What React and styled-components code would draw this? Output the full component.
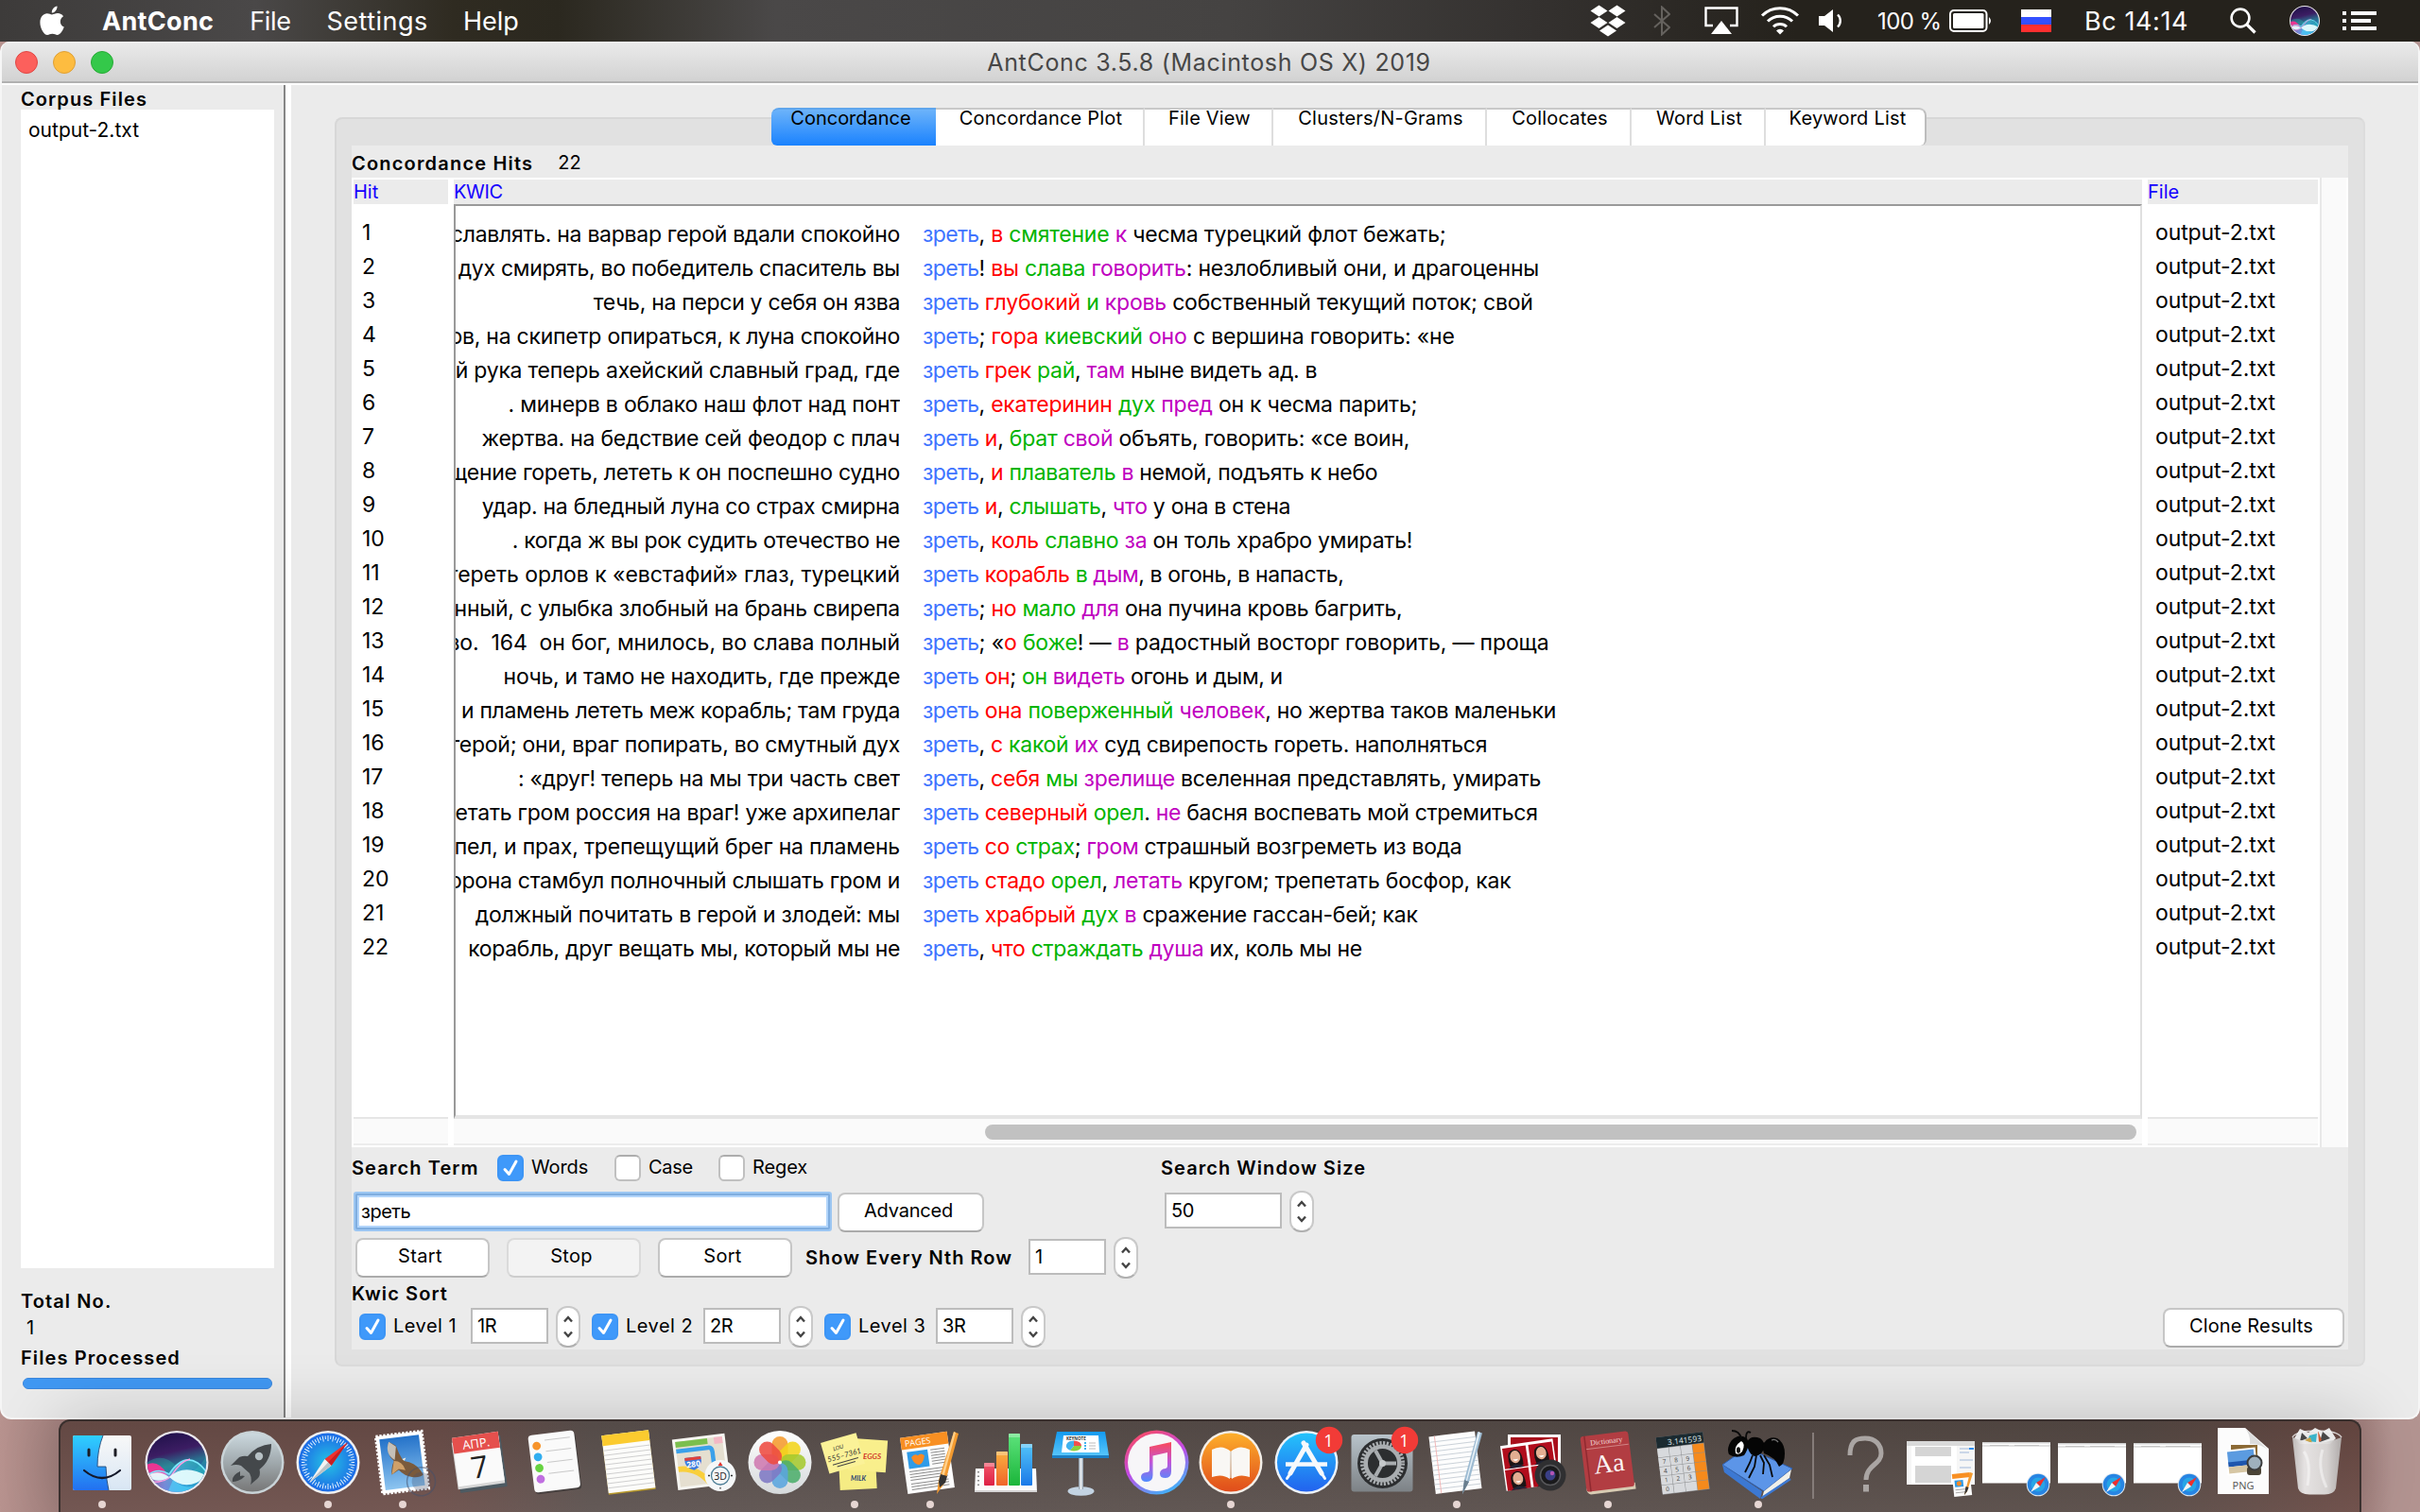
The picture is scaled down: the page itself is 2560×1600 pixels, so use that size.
import React from "react";
import styled, { createGlobalStyle, css } from "styled-components";

const Global = createGlobalStyle`
  * { box-sizing: border-box; }
  html, body { margin: 0; padding: 0; }
  body {
    width: 2560px;
    height: 1600px;
    overflow: hidden;
    font-family: Inter, "Noto Sans", "Liberation Sans", sans-serif;
    color: #000;
  }
  svg { display: block; flex: none; }
`;

/* ---------- desktop + menu bar ---------- */

const Desktop = styled.div`
  display: flex;
  flex-direction: column;
  width: 2560px;
  height: 1600px;
  overflow: hidden;
  background: linear-gradient(90deg, #b8938f 0, #a58380 60px, #a58380 2500px, #b39491 2530px);
`;

const MenuBar = styled.header`
  display: flex;
  align-items: center;
  height: 44px;
  flex: none;
  padding: 0 46px 0 42px;
  color: #fff;
  background: linear-gradient(
    90deg,
    #3d3b3a 0, #4a4848 270px, #2f2b21 480px, #2b281f 590px, #4a4848 820px,
    #454342 1300px, #33302e 1640px, #25221c 1900px, #25221c 2560px
  );
`;

const MenuItem = styled.span`
  font-size: 27px;
  line-height: 44px;
  padding-top: 1px;
  letter-spacing: ${(p) => p.$track || 0}px;
  font-weight: ${(p) => (p.$bold ? 700 : 400)};
  margin-left: ${(p) => p.$gap}px;
  white-space: pre;
`;

const Spacer = styled.div`
  flex: 1;
`;

const Tray = styled.div`
  display: flex;
  align-items: center;
  height: 44px;
`;

const TrayItem = styled.div`
  width: ${(p) => p.$w}px;
  margin-left: ${(p) => p.$gap || 0}px;
  display: flex;
  align-items: center;
  font-size: ${(p) => p.$size || 27}px;
  letter-spacing: ${(p) => p.$track || 0}px;
  white-space: nowrap;
`;

/* ---------- window ---------- */

const Window = styled.main`
  display: flex;
  flex-direction: column;
  width: 2560px;
  height: 1458px;
  flex: none;
  border-radius: 10px 10px 12px 12px;
  background: #ebebeb;
  overflow: hidden;
  border: solid #f6f6f6;
  border-width: 0 2px 2px 2px;
`;

const TitleBar = styled.div`
  position: relative;
  display: flex;
  align-items: center;
  justify-content: center;
  height: 44px;
  flex: none;
  margin: 0 -2px;
  background: linear-gradient(#f2f2f2 0, #e9e9e9 3px, #d2d2d2 42px);
  border-bottom: 2px solid #b1b1b1;
`;

const Lights = styled.div`
  position: absolute;
  left: 16px;
  top: 10px;
  display: flex;
  gap: 16px;
`;

const Light = styled.span`
  width: 24px;
  height: 24px;
  border-radius: 50%;
  background: ${(p) => p.$c};
  border: 1px solid ${(p) => p.$b};
`;

const Title = styled.h1`
  margin: 0 2px 0 0;
  padding-top: 2px;
  font-size: 25px;
  font-weight: 400;
  letter-spacing: 0.68px;
  color: #474747;
  line-height: 42px;
`;

const Body = styled.div`
  display: flex;
  flex: 1;
  min-height: 0;
  border-top: 2px solid #fff;
`;

const Sidebar = styled.aside`
  display: flex;
  flex-direction: column;
  width: 298px;
  padding: 0 10px 0 20px;
`;

const Bold = styled.span`
  font-size: 20px;
  font-weight: 600;
  letter-spacing: ${(p) => p.$track || 1.1}px;
  line-height: 26px;
  white-space: nowrap;
  flex: none;
  width: ${(p) => (p.$w ? `${p.$w}px` : "auto")};
`;

const SideTitle = styled(Bold)`
  height: 26px;
  line-height: 30px;
`;

const FileBox = styled.div`
  height: 1226px;
  background: #fff;
  padding: 8px 8px;
  font-size: 21px;
  line-height: 27px;
`;

const SideStats = styled.div`
  display: flex;
  flex-direction: column;
  padding-top: 22px;
`;

const Count = styled.span`
  font-size: 20px;
  line-height: 30px;
  height: 34px;
  padding-left: 6px;
`;

const ProgressBar = styled.div`
  height: 12px;
  margin: 8px 0 0 2px;
  width: 264px;
  border-radius: 6px;
  background: #4098f3;
  border: 1px solid #3a86dc;
`;

const Sash = styled.div`
  width: 8px;
  background: #fff;
  border-left: 2px solid #868686;
  flex: none;
`;

const Main = styled.section`
  flex: 1;
  min-width: 0;
  padding: 34px 56px 0 46px;
`;

const Notebook = styled.div`
  display: flex;
  flex-direction: column;
  height: 1322px;
  border: 2px solid #d7d7d7;
  border-right-color: #dcdcdc;
  border-bottom-color: #dcdcdc;
  border-radius: 8px;
  background: #e1e1e1;
  padding: 0 16px 16px;
`;

const Tabs = styled.nav`
  display: flex;
  align-self: flex-start;
  height: 40px;
  margin: -12px 0 0 444px;
  flex: none;
  border-radius: 8px;
  background: #fff;
`;

const Tab = styled.div`
  width: ${(p) => p.$w}px;
  height: 40px;
  padding-left: 3px;
  text-align: center;
  font-size: 20px;
  line-height: 19px;
  letter-spacing: 0.2px;
  white-space: nowrap;
  border-top: 2px solid #c8c8c8;
  border-right: 2px solid #dedede;
  &:last-child {
    padding-left: 5px;
    border-right-color: #bdbdbd;
    border-radius: 0 8px 6px 0;
  }
  ${(p) =>
    p.$active &&
    css`
      background: linear-gradient(#6cb3fa, #1a82fe);
      border-color: #5fa5ec;
      border-right: 0;
      border-radius: 8px 0 0 6px;
      letter-spacing: 0;
      padding: 0 6px 0 0;
    `}
`;

const Pane = styled.div`
  display: flex;
  flex-direction: column;
  flex: 1;
  background: #ebebeb;
`;

const HitsBar = styled.div`
  display: flex;
  align-items: center;
  height: 34px;
  padding-top: 4px;
`;

const HitsCount = styled.span`
  font-size: 20px;
  margin: -3px 0 0 26px;
`;

/* ---------- concordance table ---------- */

const Table = styled.div`
  display: flex;
  height: 1026px;
  background: #fff;
  padding: 2px 2px 2px 2px;
`;

const Column = styled.div`
  display: flex;
  flex-direction: column;
  width: ${(p) => p.$w}px;
  margin-right: ${(p) => p.$mr || 0}px;
`;

const Head = styled.div`
  height: 26px;
  background: #ebebeb;
  color: #1400ff;
  font-size: 20px;
  line-height: 27px;
  letter-spacing: ${(p) => p.$track || 0}px;
`;

const Cells = styled.div`
  flex: 1;
  padding: ${(p) => p.$pad};
  font-size: 23px;
`;

const Cell = styled.div`
  height: 36.02px;
  line-height: 36px;
  letter-spacing: -0.1px;
`;

const KwicBox = styled.div`
  flex: 1;
  padding-top: 12px;
  border-top: 2px solid #999;
  border-left: 2px solid #999;
  border-right: 2px solid #e0e0e0;
  border-bottom: 4px solid #e5e5e5;
  overflow: hidden;
`;

const KwicRow = styled.div`
  display: flex;
  height: 36.02px;
  font-size: 23px;
  line-height: 36px;
  white-space: pre;
`;

const LeftContext = styled.div`
  display: flex;
  justify-content: flex-end;
  width: 470px;
  overflow: hidden;
  letter-spacing: ${(p) => p.$track + 0.015}px;
`;

const RightContext = styled.div`
  padding-left: 24px;
  letter-spacing: ${(p) => p.$track + 0.08}px;
`;

const tones = { k: "#3f74ff", r: "#ff0000", g: "#00b400", m: "#c000c0" };

const Word = styled.span`
  color: ${(p) => tones[p.$tone]};
  ${(p) => p.$tone === "k" && "letter-spacing: -0.65px;"}
`;

const ScrollTrack = styled.div`
  height: ${(p) => p.$h || 28}px;
  flex: none;
  background: #fafafa;
  border-bottom: 2px solid #ececec;
  border-top: ${(p) => (p.$top ? "2px solid #e6e6e6" : "0")};
  padding: 6px 6px 0;
  display: flex;
  justify-content: flex-end;
`;

const Thumb = styled.div`
  width: 1218px;
  height: 16px;
  border-radius: 8px;
  background: #c1c1c1;
`;

const VScroll = styled.div`
  width: 28px;
  margin: -2px 0;
  background: #fafafa;
  border-left: 2px solid #e8e8e8;
`;

/* ---------- controls ---------- */

const Controls = styled.div`
  display: flex;
  flex-direction: column;
  height: 214px;
`;

const Line = styled.div`
  display: flex;
  align-items: center;
  height: ${(p) => p.$h}px;
  margin-top: ${(p) => p.$mt || 0}px;
  padding-left: ${(p) => p.$pl || 0}px;
  padding-top: ${(p) => p.$pt || 0}px;
`;

const Label = styled.span`
  font-size: 20px;
  line-height: 26px;
  width: ${(p) => p.$w}px;
  margin-left: 8px;
  padding-bottom: 2px;
  letter-spacing: ${(p) => p.$track || 0}px;
  white-space: nowrap;
  flex: none;
`;

const CheckBox = styled.span`
  display: flex;
  align-items: center;
  justify-content: center;
  width: 28px;
  height: 28px;
  flex: none;
  border-radius: 6px;
  background: #fff;
  border: 2px solid #c0c0c0;
  border-top-color: #adadad;
  ${(p) =>
    p.$on &&
    css`
      background: #3f99fa;
      border-color: #3d95f5;
    `}
`;

const Button = styled.button`
  width: ${(p) => p.$w}px;
  height: 42px;
  flex: none;
  margin: ${(p) => p.$m || 0};
  padding: 0 5px 4px 0;
  font: 400 20px Inter, sans-serif;
  letter-spacing: ${(p) => p.$track || 0}px;
  color: #000;
  background: #fff;
  border: 2px solid #c6c6c6;
  border-bottom-color: #ababab;
  border-radius: 8px;
  ${(p) =>
    p.$dim &&
    css`
      background: #f3f3f3;
      border-color: #dadada;
      border-bottom-color: #cdcdcd;
    `}
`;

const SearchField = styled.div`
  width: 506px;
  height: 42px;
  margin-right: 6px;
  border: 2px solid #9cc6f2;
  box-shadow: inset 0 0 0 2px #7faddf, inset 0 0 0 4px #b2d5fb;
  border-radius: 3px;
  background: #fff;
  font-size: 20px;
  letter-spacing: -0.5px;
  line-height: 38px;
  padding-left: 6px;
  flex: none;
`;

const Field = styled.div`
  width: ${(p) => p.$w}px;
  height: 38px;
  margin: 0 8px 2px 0;
  border: 2px solid #bcbcbc;
  background: #fff;
  font-size: 20px;
  letter-spacing: -0.4px;
  line-height: 35px;
  padding-left: 5px;
  flex: none;
`;

const SpinBody = styled.span`
  display: flex;
  flex-direction: column;
  align-items: center;
  justify-content: space-between;
  width: 26px;
  height: 44px;
  padding: 8px 0;
  border: 2px solid #c9c9c9;
  border-bottom-color: #b0b0b0;
  border-radius: 12px;
  background: #fff;
  flex: none;
`;

const Gap = styled.span`
  width: ${(p) => p.$w}px;
  flex: none;
`;

/* ---------- dock ---------- */

const DockArea = styled.footer`
  display: flex;
  justify-content: center;
  height: 98px;
  flex: none;
`;

const Dock = styled.div`
  display: flex;
  position: relative;
  width: 2436px;
  height: 98px;
  padding-left: 4px;
  border: solid #3a302e;
  border-width: 2px 2px 0 2px;
  border-radius: 12px 12px 0 0;
  background: linear-gradient(180deg, rgba(20, 15, 12, 0.12), rgba(160, 150, 150, 0.1)),
    linear-gradient(90deg, #6e504b 0, #6e504b 400px, #5d5350 560px, #574d49 1800px, #574b46 2200px, #6c4b45 2430px);
  box-shadow: 0 0 70px rgba(0, 0, 0, 0.2);
`;

const Slot = styled.div`
  display: flex;
  flex-direction: column;
  align-items: center;
  width: ${(p) => p.$w || 79.65}px;
  flex: none;
  margin-top: -2px;
`;

const Dot = styled.span`
  width: 8px;
  height: 8px;
  margin-top: 2px;
  border-radius: 50%;
  background: #e6d6d3;
`;

const DockLine = styled.span`
  width: 2px;
  height: 70px;
  margin: 12px 14px 0 17px;
  background: #857c79;
  flex: none;
`;

/* ---------- small drawings ---------- */

const Check = () => (
  <svg width="20" height="22" viewBox="0 0 20 22">
    <path d="M4 12.5 L8.5 17.5 L16 4" fill="none" stroke="#fff" strokeWidth="3" strokeLinecap="round" strokeLinejoin="round" />
  </svg>
);

const Spinner = () => (
  <SpinBody>
    <svg width="12" height="8" viewBox="0 0 12 8"><path d="M2 6.5 L6 2 L10 6.5" fill="none" stroke="#444" strokeWidth="2.4" /></svg>
    <svg width="12" height="8" viewBox="0 0 12 8"><path d="M2 1.5 L6 6 L10 1.5" fill="none" stroke="#444" strokeWidth="2.4" /></svg>
  </SpinBody>
);

const Apple = () => (
  <svg width="26" height="32" viewBox="0 0 26 32" fill="#fff">
    <path d="M18.5 0.5 C18.8 3.8 16 7.6 12.8 7.6 C12.4 4.4 15.2 1 18.5 .5 Z" />
    <path d="M13 9.4 C14.7 9.4 16.5 8 19.2 8.1 C21.6 8.2 23.8 9.3 25 11.2 C20.3 14.2 21 20.6 25.8 22.5 C24.6 26 21.7 30.9 18.7 31 C16.7 31 15.9 29.8 13.4 29.8 C10.9 29.8 10 31 8.1 31 C4.6 31 .4 24.2 .4 17.7 C.4 11.7 4.1 8.2 7.8 8.2 C10 8.2 11.7 9.4 13 9.4 Z" />
  </svg>
);

const DropboxGlyph = () => (
  <svg width="38" height="34" viewBox="0 0 38 34" fill="#fff">
    <path d="M9.5 .5 L18.500 6.5 L9.5 12.5 L.5 6.5 Z M28.5 .5 L37.500 6.5 L28.5 12.5 L19.500 6.5 Z M9.5 13 L18.500 19 L9.5 25 L.5 19 Z M28.5 13 L37.500 19 L28.5 25 L19.500 19 Z M19 21.500 L28 27.500 L19 33.500 L10 27.500 Z" />
  </svg>
);

const BluetoothGlyph = () => (
  <svg width="18" height="32" viewBox="0 0 18 32">
    <path d="M1 9 L17 23 L9 30.5 V1.5 L17 9 L1 23" fill="none" stroke="#65625e" strokeWidth="2" />
  </svg>
);

const AirplayGlyph = () => (
  <svg width="36" height="30" viewBox="0 0 36 30">
    <path d="M9 20 H1.5 V1.5 H34.5 V20 H27" fill="none" stroke="#fff" strokeWidth="2.4" />
    <path d="M18 15 L29 29 H7 Z" fill="#fff" />
  </svg>
);

const WifiGlyph = () => (
  <svg width="42" height="30" viewBox="0 0 42 30">
    <g fill="none" stroke="#fff" strokeWidth="3">
      <path d="M2 9.5 A27 27 0 0 1 40 9.5" />
      <path d="M8 15.5 A18.5 18.5 0 0 1 34 15.5" />
      <path d="M14 21.3 A10 10 0 0 1 28 21.3" />
    </g>
    <path d="M21 29.5 L17 25.4 A5.6 5.6 0 0 1 25 25.4 Z" fill="#fff" />
  </svg>
);

const VolumeGlyph = () => (
  <svg width="28" height="26" viewBox="0 0 28 26">
    <path d="M0 8 H6 L15 1 V25 L6 18 H0 Z" fill="#fff" />
    <path d="M20 6.5 A9 9 0 0 1 20 19.5" fill="none" stroke="#fff" strokeWidth="2.4" />
  </svg>
);

const BatteryGlyph = () => (
  <svg width="46" height="24" viewBox="0 0 46 24">
    <rect x="1" y="1" width="38.5" height="22" rx="4" fill="none" stroke="#fff" strokeWidth="2" />
    <rect x="4" y="4" width="32.5" height="16" rx="1.5" fill="#fff" />
    <path d="M42 8 Q46 12 42 16 Z" fill="#fff" />
  </svg>
);

const FlagGlyph = () => (
  <svg width="32" height="24" viewBox="0 0 32 24">
    <rect width="32" height="8" fill="#fff" />
    <rect y="8" width="32" height="8" fill="#3350ff" />
    <rect y="16" width="32" height="8" fill="#ff2f2f" />
  </svg>
);

const SearchGlyph = () => (
  <svg width="28" height="28" viewBox="0 0 28 28" fill="none" stroke="#fff">
    <circle cx="11" cy="11" r="9.4" strokeWidth="2.6" />
    <path d="M17.8 17.8 L26.5 26.5" strokeWidth="3.2" />
  </svg>
);

const MenuListGlyph = () => (
  <svg width="36" height="20" viewBox="0 0 36 20" fill="#fff">
    <path d="M0 0h4v4H0z M0 8h4v4H0z M0 16h4v4H0z M9 0h27v4H9z M9 8h21v4H9z M9 16h27v4H9z" />
  </svg>
);

const Defs = () => (
  <svg width="0" height="0" viewBox="0 0 1 1">
    <defs>
      <linearGradient id="finderL" x1="0" y1="0" x2="0" y2="1"><stop offset="0" stopColor="#2fd0ff" /><stop offset="1" stopColor="#2370f0" /></linearGradient>
      <linearGradient id="finderR" x1="0" y1="0" x2="0" y2="1"><stop offset="0" stopColor="#f8f8f8" /><stop offset="1" stopColor="#d8e6f4" /></linearGradient>
      <linearGradient id="siriBg" x1="0" y1="0" x2="0.25" y2="1"><stop offset="0" stopColor="#1b0f46" /><stop offset=".4" stopColor="#3c1d63" /><stop offset=".62" stopColor="#2a6f8f" /><stop offset="1" stopColor="#1b3fd8" /></linearGradient>
      <linearGradient id="siriWave" x1="0" y1="0" x2="1" y2="0"><stop offset="0" stopColor="#ff2e92" /><stop offset=".3" stopColor="#c9a4f4" /><stop offset=".6" stopColor="#4fe0f2" /><stop offset="1" stopColor="#22c7b0" /></linearGradient>
      <linearGradient id="launch" x1="0" y1="0" x2="0" y2="1"><stop offset="0" stopColor="#ccd9df" /><stop offset=".5" stopColor="#a0a9ad" /><stop offset="1" stopColor="#777" /></linearGradient>
      <radialGradient id="safariBg"><stop offset="0" stopColor="#25c3e4" /><stop offset="1" stopColor="#1d6be6" /></radialGradient>
      <linearGradient id="sky" x1="0" y1="0" x2="0" y2="1"><stop offset="0" stopColor="#2472c9" /><stop offset="1" stopColor="#8cc4f0" /></linearGradient>
      <linearGradient id="silver" x1="0" y1="0" x2="0" y2="1"><stop offset="0" stopColor="#fff" /><stop offset="1" stopColor="#d5d9db" /></linearGradient>
      <linearGradient id="tunesRing" x1="0.2" y1="0" x2="0.7" y2="1"><stop offset="0" stopColor="#fb4a5e" /><stop offset=".5" stopColor="#c24be6" /><stop offset="1" stopColor="#3ab8fa" /></linearGradient>
      <linearGradient id="note" x1="0" y1="0" x2="0" y2="1"><stop offset="0" stopColor="#fb4a58" /><stop offset=".5" stopColor="#c254d8" /><stop offset="1" stopColor="#4f8bff" /></linearGradient>
      <linearGradient id="books" x1="0" y1="0" x2="0" y2="1"><stop offset="0" stopColor="#fdaf2b" /><stop offset="1" stopColor="#e04c1b" /></linearGradient>
      <linearGradient id="store" x1="0" y1="0" x2="0" y2="1"><stop offset="0" stopColor="#24c3fb" /><stop offset="1" stopColor="#2262ee" /></linearGradient>
      <linearGradient id="gearBg" x1="0" y1="0" x2="0" y2="1"><stop offset="0" stopColor="#b9c4cb" /><stop offset="1" stopColor="#7d8286" /></linearGradient>
      <linearGradient id="barR" x1="0" y1="0" x2="0" y2="1"><stop offset="0" stopColor="#f2566a" /><stop offset="1" stopColor="#dd2145" /></linearGradient>
      <linearGradient id="barO" x1="0" y1="0" x2="0" y2="1"><stop offset="0" stopColor="#fbb040" /><stop offset="1" stopColor="#f0652a" /></linearGradient>
      <linearGradient id="barG" x1="0" y1="0" x2="0" y2="1"><stop offset="0" stopColor="#5de37c" /><stop offset="1" stopColor="#1bb53a" /></linearGradient>
      <linearGradient id="barB" x1="0" y1="0" x2="0" y2="1"><stop offset="0" stopColor="#53c4f8" /><stop offset="1" stopColor="#1a79e8" /></linearGradient>
      <linearGradient id="blueTop" x1="0" y1="0" x2="0" y2="1"><stop offset="0" stopColor="#149af0" /><stop offset="1" stopColor="#56c5fa" /></linearGradient>
      <linearGradient id="pole" x1="0" y1="0" x2="1" y2="0"><stop offset="0" stopColor="#8a98a6" /><stop offset=".5" stopColor="#eef3f7" /><stop offset="1" stopColor="#8a98a6" /></linearGradient>
      <linearGradient id="bin" x1="0" y1="0" x2="1" y2="0"><stop offset="0" stopColor="#c2bfbe" /><stop offset=".25" stopColor="#eceaea" /><stop offset=".7" stopColor="#dddbda" /><stop offset="1" stopColor="#b3afae" /></linearGradient>
      <clipPath id="disc"><circle cx="40" cy="45.5" r="31.3" /></clipPath>
    </defs>
  </svg>
);

const SiriArt = () => (
  <>
    <circle cx="40" cy="45.5" r="33.5" fill="#ece9ee" />
    <circle cx="40" cy="45.5" r="31.3" fill="url(#siriBg)" />
    <g clipPath="url(#disc)">
      <path d="M8 46 Q25 34 40 50 T72 38 V78 H8 Z" fill="#2bb7a8" opacity=".35" />
      <path d="M8 48 Q20 42 30 58 Q22 62 8 60 Z" fill="#ff2e92" opacity=".9" />
      <path d="M8 60 Q20 50 32 58 Q46 36 62 46 Q70 52 72 58 V78 H8 Z" fill="url(#siriWave)" opacity=".5" />
      <path d="M8 60 Q20 50 32 58 Q46 36 62 46 Q70 52 72 58" fill="none" stroke="#7be9ff" strokeWidth="1.6" />
      <path d="M8 66 Q26 68 34 60 Q44 44 54 42" fill="none" stroke="#ff9ce0" strokeWidth="1.4" />
      <path d="M8 60 Q20 52 32 61 Q48 46 72 60 Q50 78 32 61 Q20 69 8 60 Z" fill="#eaffff" opacity=".92" />
      <path d="M36 64 Q54 80 72 62 V78 H30 Z" fill="#4fd7ff" opacity=".6" />
    </g>
  </>
);

const ticks = Array.from({ length: 60 }, (_, i) => i * 6);

const SafariArt = () => (
  <>
    <circle cx="40" cy="45.5" r="33.5" fill="#f1f1f1" />
    <circle cx="40" cy="45.5" r="31" fill="url(#safariBg)" />
    {ticks.map((a) => (
      <path key={a} d={a % 12 ? "M40 17.5 v3.4" : "M40 17 v6"} stroke="#e6f4ff" strokeWidth="1" transform={`rotate(${a} 40 45.5)`} />
    ))}
    <path d="M61 24 L36.5 42 L43.5 49 Z" fill="#f0322f" />
    <path d="M61 24 L43.5 49 L40 45.5 Z" fill="#c81f22" />
    <path d="M20 67 L36.5 42 L43.5 49 Z" fill="#f3f3f3" />
    <path d="M20 67 L43.5 49 L40 45.5 Z" fill="#bcc2c6" />
  </>
);

const petals = ["#f59b2e", "#f3d51c", "#a5c92f", "#4dae6c", "#5aa5de", "#7e79c4", "#cf7ab0", "#ee4b41"];

const Face = ({ x, y }) => (
  <g transform={`translate(${x} ${y}) rotate(-8)`}>
    <rect width="25" height="22" fill="#b00d1c" />
    <path d="M5 14 Q4 3 12 2.5 Q21 3 20 20 L6 20 Z" fill="#1c1415" />
    <ellipse cx="12.5" cy="10.5" rx="5.4" ry="6.6" fill="#e3ae92" />
    <path d="M9.5 13 Q12.5 16.5 15.5 13 Z" fill="#fff" />
    <path d="M4 22 Q12 15 21 22 Z" fill="#1f2436" />
  </g>
);

const MiniSafari = ({ x, y }) => (
  <g transform={`translate(${x} ${y})`}>
    <circle r="12.3" fill="#dfe9f2" />
    <circle r="11.3" fill="#2785e3" />
    <circle r="7.5" fill="#27a5e6" />
    <path d="M8 -8 L-2 -2 L2 2 Z" fill="#ee2f2d" />
    <path d="M-8 8 L-2 -2 L2 2 Z" fill="#f4f4f4" />
  </g>
);

const art = {
  finder: (
    <>
      <rect x="9" y="17" width="62" height="58" rx="2" fill="url(#finderR)" />
      <path d="M11 17 H41 Q35 32 35 50 H44 Q44.500 65 47 75 H11 Q9 75 9 73 V19 Q9 17 11 17 Z" fill="url(#finderL)" />
      <path d="M41 17 Q35 32 35 50 H44 Q44.500 65 47 75" fill="none" stroke="#254a78" strokeWidth=".9" />
      <path d="M26 32 v6 M54 32 v6" stroke="#1c1c24" strokeWidth="3" strokeLinecap="round" />
      <path d="M21 54 Q40 70 59 54" fill="none" stroke="#14182a" strokeWidth="2.2" strokeLinecap="round" />
    </>
  ),
  siri: <SiriArt />,
  launchpad: (
    <>
      <circle cx="40" cy="45.500" r="33.500" fill="#c9d3d7" />
      <circle cx="40" cy="45.500" r="31" fill="url(#launch)" />
      <path d="M60 26 Q45 27 35 39 Q27 38 24 42 L17 49 Q23 47 28 49 L37 57 Q40 63 38 69 L45 63 Q49 60 47.500 53 Q60 43 60 26 Z" fill="#44484b" />
      <circle cx="47" cy="39" r="4.200" fill="#b6c0c4" />
      <path d="M27 55 Q18 59 19 66 Q27 66 32 60 Q29 59 27 60 Z" fill="#44484b" />
    </>
  ),
  safari: <SafariArt />,
  mail: (
    <g transform="rotate(-7 40 46)">
      <rect x="15" y="15" width="49" height="61" fill="#fff" stroke="#fff" strokeWidth="3" strokeDasharray="2.400 1.600" />
      <rect x="18.500" y="18.500" width="42" height="54" fill="url(#sky)" />
      <path d="M28 22 Q23 34 31 43 Q27 50 27 57 L35 53 Q40 60 48 62 Q56 64 60 61 Q56 50 47 46 Q42 45 40 42 Q37 36 35 27 Z" fill="#7a5a3c" />
      <path d="M28 22 Q22 34 32 42 L35 28 Z" fill="#c5c0b8" />
      <path d="M31 43 Q40 44 42 54 L35 52 L27 57 Z" fill="#cfa069" />
      <path d="M40 42 l4 -1 l-2 3 Z" fill="#f4efe4" />
      <circle cx="57" cy="68" r="15" fill="none" stroke="#46506a" strokeWidth="1.500" opacity=".55" />
      <circle cx="57" cy="68" r="10" fill="#46506a" opacity=".3" />
    </g>
  ),
  calendar: (
    <g transform="rotate(-8 40 46)">
      <rect x="17" y="20" width="50" height="55" rx="1" fill="#4d5a62" />
      <rect x="15" y="21" width="50" height="50" fill="#d7d7d7" />
      <rect x="16" y="16" width="49" height="52" fill="#fafafa" />
      <rect x="16" y="16" width="49" height="17" fill="#e5504d" />
      <text x="40.500" y="30" textAnchor="middle" fontFamily="Open Sans" fontSize="13" fill="#fff">АПР.</text>
      <text x="40.500" y="62" textAnchor="middle" fontFamily="Open Sans" fontSize="32" fill="#222">7</text>
    </g>
  ),
  reminders: (
    <g transform="rotate(-7 40 46)">
      <rect x="17" y="16" width="49" height="61" rx="4" fill="#2d2d2d" opacity=".55" />
      <rect x="16" y="14" width="49" height="61" rx="4" fill="#fafafa" />
      {["#f7942b", "#31aef0", "#66d341", "#c06fe0"].map((c, i) => (
        <React.Fragment key={c}>
          <circle cx="24" cy={26 + i * 11.800} r="4.400" fill={c} />
          <path d={`M33 ${21 + i * 11.800} H60`} stroke="#c9c9c9" strokeWidth="1" />
        </React.Fragment>
      ))}
    </g>
  ),
  notes: (
    <g transform="rotate(-7 40 46)">
      <rect x="15" y="14" width="50" height="63" fill="#b99a2c" />
      <rect x="15" y="14" width="50" height="61.500" fill="#fcfcfa" />
      <rect x="15" y="14" width="50" height="11" fill="#fbcb2f" />
      {[30, 35, 40, 45, 50, 55, 60, 65, 70].map((y) => (
        <path key={y} d={`M15 ${y} H65`} stroke="#cfcfcf" strokeWidth="1" />
      ))}
    </g>
  ),
  maps: (
    <>
      <g transform="rotate(-7 36 46)">
        <rect x="9" y="18" width="56" height="54" fill="#f7f6f2" />
        <rect x="12" y="21" width="50" height="48" fill="#e5dfd0" />
        <path d="M12 21 H46 V27 L12 27 Z" fill="#7bbf4e" />
        <rect x="53" y="21" width="9" height="7" fill="#f3b8c4" />
        <path d="M12 31 H46 Q50 31 50 36 V69" fill="none" stroke="#3aa0ea" strokeWidth="4.500" />
        <path d="M12 50 Q32 50 44 69" fill="none" stroke="#f9cf3c" strokeWidth="6" />
        <path d="M20 39 h17 q2 10 -8.500 14 q-10.500 -4 -8.500 -14 Z" fill="#3b7be0" />
        <path d="M20 39 h17 v3 h-17 Z" fill="#e0413b" />
        <text x="28.500" y="49.500" textAnchor="middle" fontFamily="Open Sans" fontSize="8.500" fontWeight="700" fill="#fff">280</text>
      </g>
      <circle cx="57" cy="59.500" r="16.500" fill="#f5f7f8" />
      <circle cx="57" cy="59.500" r="9.500" fill="none" stroke="#4d7e96" strokeWidth="1.300" />
      <path d="M57 45 l2.500 4 h-5 Z" fill="#e2322d" />
      <path d="M44 59.500 h2 M68 59.500 h2 M57 72 v1.500" stroke="#333" strokeWidth="1.300" />
      <text x="57" y="63.500" textAnchor="middle" fontFamily="Open Sans" fontSize="10.500" fill="#222">3D</text>
    </>
  ),
  photos: (
    <>
      <circle cx="40" cy="45.500" r="33.500" fill="url(#silver)" />
      {petals.map((c, i) => (
        <rect key={c} x="31.500" y="18" width="17" height="27" rx="8.500" fill={c} opacity=".88" transform={`rotate(${i * 45} 40 45.500)`} />
      ))}
      <circle cx="40" cy="45.500" r="2" fill="#fff" />
    </>
  ),
  stickies: (
    <>
      <rect x="24" y="46" width="39" height="28" fill="#f5ec84" transform="rotate(-3 44 60)" />
      <rect x="34" y="21" width="40" height="34" fill="#f9ef8c" transform="rotate(4 54 38)" />
      <rect x="8" y="19" width="39" height="34" fill="#fbf298" transform="rotate(-16 27 36)" />
      <g fontFamily="Lato" fontStyle="italic" fill="#333" transform="rotate(-16 27 36)">
        <text x="19" y="31" fontSize="6">LOU</text>
        <text x="10" y="41" fontSize="8">555–7361</text>
        <path d="M14 45 h28 M18 48 h20" stroke="#444" strokeWidth="1" />
      </g>
      <text x="49" y="42" fontFamily="Lato" fontStyle="italic" fontWeight="700" fontSize="8" fill="#d2392b">EGGS</text>
      <text x="36" y="65" fontFamily="Lato" fontStyle="italic" fontWeight="700" fontSize="7" fill="#2b3f73">MILK</text>
    </>
  ),
  pages: (
    <>
      <g transform="rotate(-8 36 46)">
        <rect x="12" y="16" width="50" height="60" fill="#fcfcfc" />
        <rect x="12" y="16" width="50" height="13" fill="#f88f22" />
        <text x="16" y="26" fontFamily="Open Sans" fontSize="9" fontWeight="400" fill="#fff">PAGES</text>
        <rect x="17" y="32" width="22" height="18" fill="#2e9be8" />
        <path d="M21 38 Q25 34 28 37 Q32 34 35 38 Q33 46 28 47 Q23 46 21 38 Z" fill="#f68a26" />
        {[33, 36, 39, 42, 45, 48].map((y) => <path key={y} d={`M42 ${y} H57`} stroke="#8c8c8c" strokeWidth="1" />)}
        {[53, 56, 59, 62, 66, 69, 72].map((y) => <path key={y} d={`M17 ${y} H57`} stroke="#8c8c8c" strokeWidth="1" />)}
      </g>
      <path d="M65 13 L70 15 L56 66 L47 79 L49 64 Z" fill="#f39a2f" />
      <path d="M65 13 L67 14 L53 66 L49 70 Z" fill="#ffd08a" />
      <path d="M51 58 L58 60 L56 67 L50 72 L49 66 Z" fill="#333" />
    </>
  ),
  numbers: (
    <>
      <path d="M8 52 H72 L73 77 H7 Z" fill="#fbfbfb" />
      <path d="M7 76 H73" stroke="#c8c8c8" strokeWidth="1.500" />
      <path d="M11 55 v16" stroke="#8d8d8d" strokeWidth="2" strokeDasharray="1.500 3" />
      <rect x="17" y="46" width="11" height="24" rx="1" fill="url(#barR)" />
      <rect x="30" y="34" width="12" height="36" rx="1" fill="url(#barO)" />
      <rect x="43" y="15" width="12" height="55" rx="1" fill="url(#barG)" />
      <rect x="56" y="26" width="12" height="44" rx="1" fill="url(#barB)" />
      <path d="M17 46h11v4H17z M30 34h12v4H30z M43 15h12v4H43z M56 26h12v4H56z" fill="#fff" opacity=".3" />
    </>
  ),
  keynote: (
    <>
      <path d="M38 38 h5 v38 h-5 Z" fill="url(#pole)" />
      <ellipse cx="40.500" cy="76" rx="14" ry="4.800" fill="#c3d3e2" />
      <path d="M38 38 h5 v36 h-5 Z" fill="url(#pole)" />
      <path d="M15 13 H66 L70 38 H10 Z" fill="url(#blueTop)" />
      <path d="M10 38 H70 V41 H10 Z" fill="#1c7fc4" />
      <path d="M22 17 H59 L60 35 H20 Z" fill="#fff" />
      <text x="25" y="21.500" fontFamily="Open Sans" fontSize="4.500" fontWeight="700" fill="#333">KEYNOTE</text>
      <path d="M33 28 V22.500 A8 5.500 0 0 1 41 28 Z" fill="#f0504d" />
      <path d="M33 28 H41 A8 5.500 0 0 1 29 32.800 Z" fill="#8bd13e" />
      <path d="M33 28 L29 32.800 A8 5.500 0 0 1 33 22.500 Z" fill="#41b2ee" />
      <path d="M45 24 v9" stroke="#41b2ee" strokeWidth="2" strokeDasharray="2 1" />
      <path d="M49 25 h7 M49 28 h7 M49 31 h7" stroke="#bbb" strokeWidth="1" />
    </>
  ),
  itunes: (
    <>
      <circle cx="40.500" cy="45.500" r="34" fill="url(#tunesRing)" />
      <circle cx="40.500" cy="45.500" r="30.500" fill="#f7f6f8" />
      <path d="M33 29 L56 24 V55 Q56 62 50 62 Q44 62 44 57.500 Q44 52.500 50 52 Q52 51.800 52 49 V35 L36.500 38.500 V59 Q36.500 66 30 66 Q24 66 24 61 Q24 56.500 30 56 Q33 55.800 33 53 Z" fill="url(#note)" />
    </>
  ),
  ibooks: (
    <>
      <circle cx="40" cy="45.500" r="33.500" fill="#f3efe9" />
      <circle cx="40" cy="45.500" r="31" fill="url(#books)" />
      <path d="M40 34 Q31 26 20 32 V61 Q31 57 39 63 Z M40 34 Q49 26 60 32 V61 Q49 57 41 63 Z" fill="#f9f7f4" />
      <path d="M40 34 V62" stroke="#d9cfc5" strokeWidth="1.500" />
    </>
  ),
  appstore: (
    <>
      <circle cx="40" cy="45.500" r="33.500" fill="#edf3f8" />
      <circle cx="40" cy="45.500" r="31" fill="url(#store)" />
      <g stroke="#f6f9fc" strokeLinecap="round" fill="none">
        <path d="M18 47.500 H62" strokeWidth="4.500" strokeLinecap="butt" />
        <path d="M40 27 L23 57" strokeWidth="5" />
        <path d="M37 25 L56 57" strokeWidth="5" />
        <path d="M22.500 58 L19.500 62.500 M57 58.500 L59.500 62.500" strokeWidth="3" />
      </g>
    </>
  ),
  settings: (
    <>
      <rect x="7.500" y="16" width="65" height="60.500" rx="3" fill="url(#gearBg)" />
      <circle cx="40.500" cy="46.500" r="26.500" fill="#2c2e30" />
      <circle cx="40.500" cy="46.500" r="21.500" fill="none" stroke="#a9adb0" strokeWidth="4" strokeDasharray="2.200 1.550" />
      <circle cx="40.500" cy="46.500" r="17.800" fill="none" stroke="#a9adb0" strokeWidth="4.500" />
      <path d="M40.500 46.500 L55 46.500 M40.500 46.500 L33 33 M40.500 46.500 L33 60" stroke="#a9adb0" strokeWidth="4" />
      <circle cx="40.500" cy="46.500" r="3.500" fill="#c4c8ca" />
    </>
  ),
  textedit: (
    <>
      <g transform="rotate(-7 40 46)">
        <rect x="14" y="15" width="49" height="61" fill="#fdfdfd" />
        {[21, 26, 31, 36, 41, 46, 51, 56, 61, 66, 71].map((y) => <path key={y} d={`M14 ${y} H63`} stroke="#c7ced6" strokeWidth=".9" />)}
        <path d="M20 15 V76" stroke="#f2b4b4" strokeWidth=".9" />
      </g>
      <path d="M62 13 L67 14.500 L53 66 L46 79 L48 64 Z" fill="#9dbbd2" />
      <path d="M63 13 L65 14 L51 65 L47 76 Z" fill="#e5f0f7" />
      <path d="M48 64 L53 66 L46 79 Z" fill="#6a7e8e" />
    </>
  ),
  photobooth: (
    <>
      <rect x="14" y="16" width="56" height="50" fill="#fff" />
      <rect x="17" y="19" width="50" height="44" fill="#a90f1c" />
      <rect x="9" y="24" width="56" height="48" fill="#fff" transform="rotate(-8 37 48)" />
      <Face x="8" y="31" />
      <Face x="35.500" y="27" />
      <Face x="11" y="54" />
      <Face x="38.500" y="50" />
      <circle cx="59" cy="59" r="16.500" fill="#2f2f31" />
      <circle cx="59" cy="59" r="10.500" fill="#1a1a1c" stroke="#58585b" strokeWidth="1.500" />
      <circle cx="59" cy="59" r="5.500" fill="#3a3f86" />
      <circle cx="61" cy="57" r="2.200" fill="#b255b5" />
    </>
  ),
  dictionary: (
    <g transform="rotate(-7 40 46)">
      <path d="M14 70 Q14 76 18 77 H66 V70 Z" fill="#d8cbb2" />
      <rect x="14" y="15" width="51" height="59" rx="3" fill="#b23d42" />
      <path d="M18.500 15 V74" stroke="#8f2a30" strokeWidth="1.500" />
      <path d="M19 29 H64" stroke="#d38a8a" strokeWidth=".9" />
      <text x="41" y="25.500" textAnchor="middle" fontFamily="Liberation Serif" fontSize="8" fill="#f3dcdc">Dictionary</text>
      <text x="41" y="56" textAnchor="middle" fontFamily="Liberation Serif" fontSize="28" fill="#fbf3f3">Aa</text>
    </g>
  ),
  calculator: (
    <g transform="rotate(-7 40 46)">
      <rect x="15" y="16" width="50" height="61" fill="#8d8f91" />
      <rect x="15" y="16" width="50" height="11.500" fill="#1b2a30" />
      <text x="63" y="25.500" textAnchor="end" fontFamily="Open Sans" fontSize="8.500" fill="#dfe6e8">3.141593</text>
      {[0, 1, 2, 3, 4].map((r) =>
        [0, 1, 2, 3].map((c) => (
          <rect key={`${r}${c}`} x={15 + c * 12.500} y={28 + r * 9.800} width="12" height="9.300" fill={c === 3 ? "#f58a1c" : "#d8dadd"} />
        ))
      )}
      <g fontFamily="Open Sans" fontSize="6.500" fill="#444">
        <text x="19" y="44.500">7</text><text x="31.500" y="44.500">8</text><text x="44" y="44.500">9</text>
        <text x="19" y="54.500">4</text><text x="31.500" y="54.500">5</text><text x="44" y="54.500">6</text>
        <text x="19" y="64">1</text><text x="31.500" y="64">2</text><text x="44" y="64">3</text>
        <text x="19" y="74">0</text>
      </g>
    </g>
  ),
  ant: (
    <>
      <path d="M2 48 L28 30 L76 52 L46 76 Z" fill="#5c95e8" stroke="#2d5fb0" strokeWidth="1" />
      <path d="M2 48 L44 76 L42 84 L4 56 Z" fill="#3c78d2" />
      <path d="M46 76 L75 53 L73 62 L44 83 Z" fill="#f0f0ea" />
      <path d="M43 83.500 L74 63" stroke="#3c78d2" strokeWidth="2.500" />
      <path d="M34 38 L31 46 L26 56 M38 38 L36 50 L30 62 M42 38 L46 46 L45 58 M46 38 L52 48 L55 61" fill="none" stroke="#0a0a0a" strokeWidth="1.800" />
      <path d="M9 37 Q6 30 12 22 Q20 14 28 20 Q32 28 25 38 Q16 42 9 37 Z" fill="#050505" />
      <path d="M16 36 Q14 28 22 23 Q27 26 23 34 Q20 38 16 36 Z" fill="#fff" />
      <ellipse cx="19" cy="32.500" rx="2" ry="3.200" fill="#111" />
      <path d="M28 24 Q32 16 42 20 Q46 23 47 28 Q45 38 36 39 Q29 37 28 24 Z" fill="#050505" />
      <path d="M44 28 Q50 17 60 20 Q68 25 68 36 Q68 48 62 50 Q58 40 46 36 Z" fill="#050505" />
      <path d="M22 20 Q20 12 12 12 M27 20 Q27 11 32 14" fill="none" stroke="#0a0a0a" strokeWidth="1.800" />
      <path d="M54 22 Q58 20 61 24" stroke="#777" strokeWidth="1.300" fill="none" />
    </>
  ),
};

const dockItems = [
  ["finder", 1], ["siri"], ["launchpad"], ["safari", 1], ["mail", 1], ["calendar"], ["reminders"], ["notes"],
  ["maps"], ["photos"], ["stickies", 1], ["pages", 1], ["numbers"], ["keynote"], ["itunes"], ["ibooks", 1],
  ["appstore", 0, 1], ["settings", 0, 1], ["textedit", 1], ["photobooth"], ["dictionary", 1], ["calculator"], ["ant", 1],
];

const DockIcon = ({ name, running, badge }) => (
  <Slot>
    <svg width="80" height="84" viewBox="0 0 80 84">
      {art[name]}
      {badge && (
        <>
          <circle cx="64" cy="22" r="14.2" fill="#f23b37" />
          <text x="63.5" y="28.5" textAnchor="middle" fontFamily="Open Sans" fontSize="18" fill="#fff">1</text>
        </>
      )}
    </svg>
    {running ? <Dot /> : null}
  </Slot>
);

const PagesThumb = () => (
  <svg width="80" height="84" viewBox="0 0 80 84">
    <rect x="4" y="23" width="72" height="46" fill="#f6f6f6" />
    <rect x="4" y="23" width="72" height="5" fill="#d9d9d9" />
    <rect x="9" y="28" width="48" height="41" fill="#fff" />
    {[30, 32, 34, 36, 38, 50, 52, 54, 56, 58, 60, 62, 64, 66].map((y) => <path key={y} d={`M13 ${y} H51`} stroke="#a2a2a2" strokeWidth=".9" />)}
    <path d="M60 31 h14 M60 35 h10 M60 43 h14 M60 51 h12" stroke="#9fb8da" strokeWidth="1.2" />
    <path d="M70 31 h5" stroke="#2d8cf0" strokeWidth="2" />
    <g transform="rotate(-6 63 69)">
      <rect x="53" y="57" width="19" height="24" fill="#fbfbfb" />
      <rect x="53" y="57" width="19" height="5" fill="#f88f22" />
      <rect x="55" y="64" width="9" height="7" fill="#2e9be8" />
      <circle cx="59.500" cy="67.500" r="2.500" fill="#f68a26" />
      <path d="M55 74 h12 M55 77 h12" stroke="#aaa" />
    </g>
    <path d="M71 56 L74 57 L68 76 L65 80 Z" fill="#f39a2f" />
    <path d="M66.500 71 L69.500 72 L68 76 L65 80 Z" fill="#333" />
  </svg>
);

const WebThumb = ({ top }) => (
  <svg width="80" height="84" viewBox="0 0 80 84">
    <rect x="4" y={top} width="72" height={67.5 - top} fill="#fff" />
    <path d={`M4 ${top + 0.7} H76`} stroke="#cfcfcf" strokeWidth="1.4" />
    <path d={`M4 ${top + 4} H76`} stroke="#e1e1e1" strokeWidth="2" />
    <path d={`M12 ${top + 3.5} h20 M38 ${top + 3.5} h26`} stroke="#c4c4c4" strokeWidth="1" />
    <MiniSafari x={63} y={69} />
  </svg>
);

const PngFile = () => (
  <svg width="80" height="84" viewBox="0 0 80 84">
    <path d="M13 9 H42 L67 31 V79 H13 Z" fill="#fcfcfc" />
    <path d="M42 9 Q48 17 47 26 Q58 25 67 33 Z" fill="#dcdcdc" />
    <rect x="27" y="27" width="28" height="24" fill="#8c6a35" />
    <g transform="rotate(-6 38 44)">
      <rect x="22" y="31" width="32" height="27" fill="#fff" />
      <rect x="24" y="33" width="28" height="12" fill="#5b9be0" />
      <rect x="24" y="44" width="28" height="5" fill="#1f56ad" />
      <rect x="24" y="49" width="28" height="7" fill="#d6c6a4" />
    </g>
    <rect x="44" y="50" width="15" height="9" rx="3" fill="#4b4436" />
    <circle cx="52" cy="46" r="7.500" fill="#9fb0bd" stroke="#3c3c3c" strokeWidth="2" />
    <text x="40" y="74" textAnchor="middle" fontFamily="Open Sans" fontSize="11" fill="#555">PNG</text>
  </svg>
);

const Trash = () => (
  <svg width="80" height="84" viewBox="0 0 80 84">
    <path d="M16 20 L22 10 L31 14 L38 9 L46 13 L53 9 L60 20 L54 26 H22 Z" fill="#e9e9e9" />
    <path d="M24 14 L30 20 L22 23 Z M46 13 L54 20 L43 24 Z" fill="#474747" />
    <path d="M32 17 l8 -2 l-1 9 l-9 -1 Z" fill="#3cb3c9" />
    <path d="M41 12 l4 10 l-3 2 Z" fill="#c9582f" />
    <path d="M27 22 l6 -3 l2 6 Z" fill="#c9a24a" />
    <path d="M14 19 Q40 30 66 19 L60 73 Q58 79 48 79.500 H32 Q22 79 20 73 Z" fill="url(#bin)" opacity=".95" />
    <path d="M14 19 Q18 12 40 12 Q62 12 66 19" fill="none" stroke="#f2f2f2" strokeWidth="1.500" opacity=".8" />
    <path d="M26 34 Q34 44 30 70 M46 32 Q40 50 50 72" fill="none" stroke="#fff" strokeWidth="3" opacity=".45" />
  </svg>
);

const Question = () => (
  <svg width="80" height="84" viewBox="0 0 80 84">
    <path d="M24 38 C24 22 31 20 40 20 C51 20 57 27 57 36 C57 48 41 48 41 64" fill="none" stroke="#aaa5a3" strokeWidth="5" />
    <rect x="38" y="69" width="6" height="7.500" fill="#aaa5a3" />
  </svg>
);

/* ---------- data ---------- */

// left context, left tracking, right context (word tones in braces), right tracking
const rows = [
  ["славлять. на варвар герой вдали спокойно", -0.3, "{k:зреть}, {r:в} {g:смятение} {m:к} чесма турецкий флот бежать;", -0.3],
  ["дух смирять, во победитель спаситель вы", -0.32, "{k:зреть}! {r:вы} {g:слава} {m:говорить}: незлобливый они, и драгоценны", -0.28],
  ["течь, на перси у себя он язва", -0.32, "{k:зреть} {r:глубокий} {g:и} {m:кровь} собственный текущий поток; свой", -0.3],
  ["ов, на скипетр опираться, к луна спокойно", -0.26, "{k:зреть}; {r:гора} {g:киевский} {m:оно} с вершина говорить: «не", -0.26],
  ["й рука теперь ахейский славный град, где", -0.25, "{k:зреть} {r:грек} {g:рай}, {m:там} ныне видеть ад. в", -0.38],
  [". минерв в облако наш флот над понт", -0.21, "{k:зреть}, {r:екатеринин} {g:дух} {m:пред} он к чесма парить;", -0.33],
  ["жертва. на бедствие сей феодор с плач", -0.27, "{k:зреть} {r:и}, {g:брат} {m:свой} объять, говорить: «се воин,", -0.31],
  ["щение гореть, лететь к он поспешно судно", -0.28, "{k:зреть}, {r:и} {g:плаватель} {m:в} немой, подъять к небо", -0.38],
  ["удар. на бледный луна со страх смирна", -0.29, "{k:зреть} {r:и}, {g:слышать}, {m:что} у она в стена", -0.37],
  [". когда ж вы рок судить отечество не", -0.37, "{k:зреть}, {r:коль} {g:славно} {m:за} он толь храбро умирать!", -0.33],
  ["тереть орлов к «евстафий» глаз, турецкий", -0.06, "{k:зреть} {r:корабль} {g:в} {m:дым}, в огонь, в напасть,", -0.47],
  ["нный, с улыбка злобный на брань свирепа", -0.26, "{k:зреть}; {r:но} {g:мало} {m:для} она пучина кровь багрить,", -0.36],
  ["во.  164  он бог, мнилось, во слава полный", -0.08, "{k:зреть}; «{r:о} {g:боже}! — {m:в} радостный восторг говорить, — проща", -0.23],
  ["ночь, и тамо не находить, где прежде", -0.33, "{k:зреть} {r:он}; {g:он} {m:видеть} огонь и дым, и", -0.45],
  ["и пламень лететь меж корабль; там груда", -0.36, "{k:зреть} {r:она} {g:поверженный} {m:человек}, но жертва таков маленьки", -0.34],
  ["герой; они, враг попирать, во смутный дух", -0.28, "{k:зреть}, {r:с} {g:какой} {m:их} суд свирепость гореть. наполняться", -0.37],
  [": «друг! теперь на мы три часть свет", -0.29, "{k:зреть}, {r:себя} {g:мы} {m:зрелище} вселенная представлять, умирать", -0.34],
  ["етать гром россия на враг! уже архипелаг", -0.25, "{k:зреть} {r:северный} {g:орел}. {m:не} басня воспевать мой стремиться", -0.37],
  ["пел, и прах, трепещущий брег на пламень", -0.2, "{k:зреть} {r:со} {g:страх}; {m:гром} страшный возгреметь из вода", -0.38],
  ["орона стамбул полночный слышать гром и", -0.3, "{k:зреть} {r:стадо} {g:орел}, {m:летать} кругом; трепетать босфор, как", -0.32],
  ["должный почитать в герой и злодей: мы", -0.23, "{k:зреть} {r:храбрый} {g:дух} {m:в} сражение гассан-бей; как", -0.34],
  ["корабль, друг вещать мы, который мы не", -0.34, "{k:зреть}, {r:что} {g:страждать} {m:душа} их, коль мы не", -0.39],
];

const tabs = [
  ["Concordance", 174], ["Concordance Plot", 221], ["File View", 136], ["Clusters/N-Grams", 226],
  ["Collocates", 153], ["Word List", 142], ["Keyword List", 170],
];

const Toned = ({ text }) =>
  text.split(/(\{\w:[^}]+\})/).map((part, i) => {
    const m = part.match(/^\{(\w):(.+)\}$/);
    return m ? <Word key={i} $tone={m[1]}>{m[2]}</Word> : part;
  });

export default function App() {
  return (
    <Desktop>
      <Global />
      <MenuBar>
        <Apple />
        <MenuItem $bold $gap={40} $track={0.32}>AntConc</MenuItem>
        <MenuItem $gap={38} $track={-0.4}>File</MenuItem>
        <MenuItem $gap={38} $track={0.5}>Settings</MenuItem>
        <MenuItem $gap={37} $track={0}>Help</MenuItem>
        <Spacer />
        <Tray>
          <TrayItem $w={38}><DropboxGlyph /></TrayItem>
          <TrayItem $w={18} $gap={29}><BluetoothGlyph /></TrayItem>
          <TrayItem $w={36} $gap={36}><AirplayGlyph /></TrayItem>
          <TrayItem $w={42} $gap={23}><WifiGlyph /></TrayItem>
          <TrayItem $w={28} $gap={20}><VolumeGlyph /></TrayItem>
          <TrayItem $w={69} $gap={34} $size={24} $track={-0.6}>100 %</TrayItem>
          <TrayItem $w={46} $gap={7}><BatteryGlyph /></TrayItem>
          <TrayItem $w={32} $gap={30}><FlagGlyph /></TrayItem>
          <TrayItem $w={110} $gap={35} $track={0.6}>Вс 14:14</TrayItem>
          <TrayItem $w={28} $gap={44}><SearchGlyph /></TrayItem>
          <TrayItem $w={32} $gap={35}><svg width="32" height="32" viewBox="6.500 12 67 67"><SiriArt /></svg></TrayItem>
          <TrayItem $w={36} $gap={24}><MenuListGlyph /></TrayItem>
        </Tray>
      </MenuBar>

      <Window>
        <TitleBar>
          <Lights>
            <Light $c="#fc605c" $b="#df4744" />
            <Light $c="#fdbc40" $b="#de9f34" />
            <Light $c="#34c84a" $b="#27aa35" />
          </Lights>
          <Title>AntConc 3.5.8 (Macintosh OS X) 2019</Title>
        </TitleBar>
        <Body>
          <Sidebar>
            <SideTitle>Corpus Files</SideTitle>
            <FileBox>output-2.txt</FileBox>
            <SideStats>
              <Bold>Total No.</Bold>
              <Count>1</Count>
              <Bold $track={1.1}>Files Processed</Bold>
            </SideStats>
            <ProgressBar />
          </Sidebar>
          <Sash />
          <Main>
            <Notebook>
              <Tabs>
                {tabs.map(([t, w], i) => <Tab key={t} $w={w} $active={i === 0}>{t}</Tab>)}
              </Tabs>
              <Pane>
                <HitsBar>
                  <Bold $track={1.19}>Concordance Hits</Bold>
                  <HitsCount>22</HitsCount>
                </HitsBar>
                <Table>
                  <Column $w={100} $mr={6}>
                    <Head>Hit</Head>
                    <Cells $pad="12px 0 0 9px">
                      {rows.map((_, i) => <Cell key={i}>{i + 1}</Cell>)}
                    </Cells>
                    <ScrollTrack $top $h={30} />
                  </Column>
                  <Column $w={1786} $mr={6}>
                    <Head $track={-0.38}>KWIC</Head>
                    <KwicBox>
                      {rows.map(([l, lt, r, rt], i) => (
                        <KwicRow key={i}>
                          <LeftContext $track={lt}>{l}</LeftContext>
                          <RightContext $track={rt}><Toned text={r} /></RightContext>
                        </KwicRow>
                      ))}
                    </KwicBox>
                    <ScrollTrack><Thumb /></ScrollTrack>
                  </Column>
                  <Column $w={180} $mr={2}>
                    <Head>File</Head>
                    <Cells $pad="12px 0 0 8px">
                      {rows.map((_, i) => <Cell key={i}>output-2.txt</Cell>)}
                    </Cells>
                    <ScrollTrack $top $h={30} />
                  </Column>
                  <VScroll />
                </Table>
                <Controls>
                  <Line $h={36} $mt={4}>
                    <Bold $w={154}>Search Term</Bold>
                    <CheckBox $on><Check /></CheckBox>
                    <Label $w={88} $track={-0.1}>Words</Label>
                    <CheckBox />
                    <Label $w={74} $track={-0.3}>Case</Label>
                    <CheckBox />
                    <Label $w={432} $track={-0.1}>Regex</Label>
                    <Bold $track={1.06}>Search Window Size</Bold>
                  </Line>
                  <Line $h={46} $mt={4} $pl={2} $pt={1}>
                    <SearchField>зреть</SearchField>
                    <Button $w={155} $track={-0.2} $m="2px 0 0">Advanced</Button>
                    <Gap $w={191} />
                    <Field $w={124}>50</Field>
                    <Spinner />
                  </Line>
                  <Line $h={46} $mt={4} $pl={4}>
                    <Button $w={142} $track={0.4} $m="0 18px 0 0">Start</Button>
                    <Button $w={142} $track={0.3} $m="0 18px 0 0" $dim>Stop</Button>
                    <Button $w={142} $track={0.3} $m="0 14px 0 0">Sort</Button>
                    <Bold $w={236} $track={1.02}>Show Every Nth Row</Bold>
                    <Field $w={82}>1</Field>
                    <Spinner />
                  </Line>
                  <Line $h={28} $pt={2}>
                    <Bold>Kwic Sort</Bold>
                  </Line>
                  <Line $h={44} $pl={8}>
                    {["1", "2", "3"].map((n) => (
                      <React.Fragment key={n}>
                        <CheckBox $on><Check /></CheckBox>
                        <Label $w={82} $track={0.5}>Level {n}</Label>
                        <Field $w={82}>{n}R</Field>
                        <Spinner />
                        <Gap $w={12} />
                      </React.Fragment>
                    ))}
                    <Spacer />
                    <Button $w={192} $track={0.15} $m="2px 4px 0 0">Clone Results</Button>
                  </Line>
                </Controls>
              </Pane>
            </Notebook>
          </Main>
        </Body>
      </Window>

      <DockArea>
        <Dock>
          <Defs />
          {dockItems.map(([name, running, badge]) => (
            <DockIcon key={name} name={name} running={running} badge={badge} />
          ))}
          <DockLine />
          <Slot $w={80}><Question /></Slot>
          <Slot $w={80}><PagesThumb /></Slot>
          <Slot $w={80}><WebThumb top={24} /></Slot>
          <Slot $w={80}><WebThumb top={25} /></Slot>
          <Slot $w={80}><WebThumb top={25} /></Slot>
          <Slot $w={80}><PngFile /></Slot>
          <Slot $w={76}><Trash /></Slot>
        </Dock>
      </DockArea>
    </Desktop>
  );
}
